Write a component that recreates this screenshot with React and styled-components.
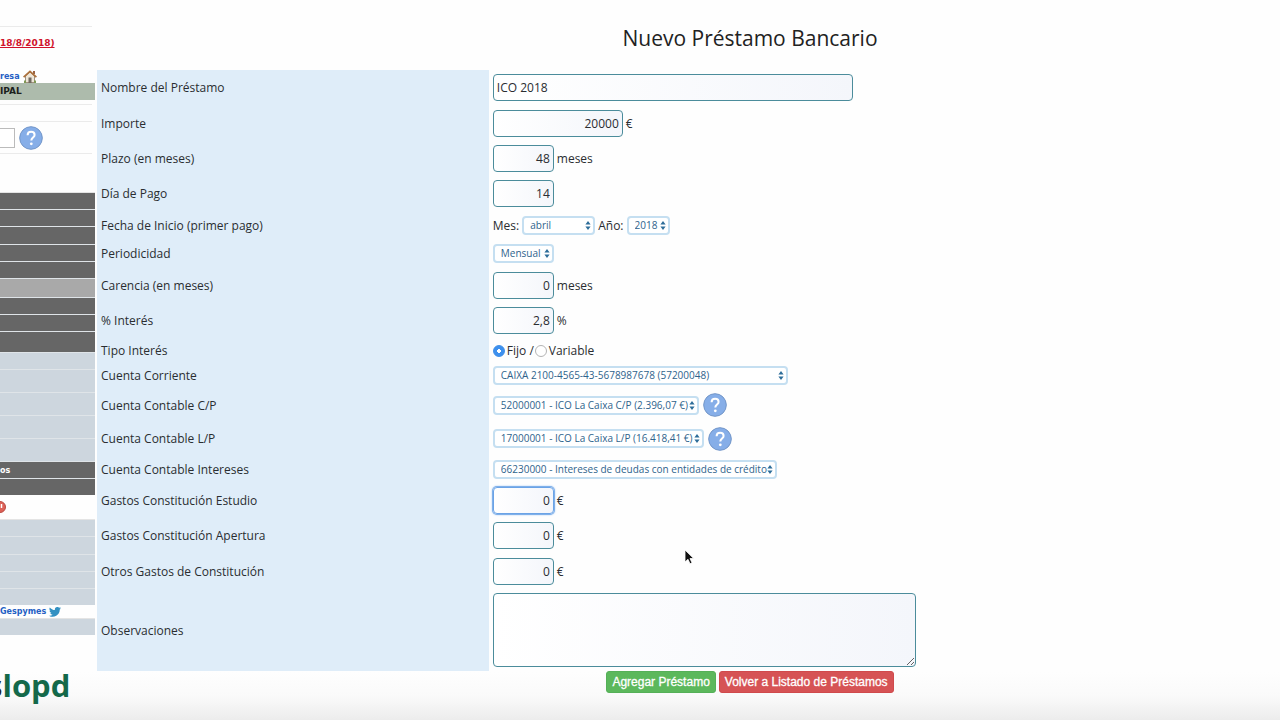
import React from 'react'
import styled, { createGlobalStyle, css } from 'styled-components'

const GlobalStyle = createGlobalStyle`
    * {
        box-sizing: border-box;
    }
    body {
        margin: 0;
        overflow: hidden;
        background: #fefefe;
        color: #2a2d31;
        font-family: 'Open Sans', 'Noto Sans', sans-serif;
        font-size: 12px;
    }
`

const Page = styled.div`
    display: flex;
    gap: 2px;
    min-height: 100vh;
    overflow: hidden;
    background: linear-gradient(to top, #ececec 0, #fafafa 24px, #fefefe 48px);
`

const Sidebar = styled.aside`
    width: 95px;
    flex: none;
    overflow: hidden;
    padding-top: 26px;
    font-family: 'DejaVu Sans', Verdana, sans-serif;
    font-size: 9px;
    font-weight: bold;
    white-space: nowrap;
`

const SideLine = styled.div`
    display: flex;
    align-items: center;
    gap: 3px;
    height: ${p => p.$height}px;
    margin-right: 3px;
    border-top: ${p => (p.$rule ? '1px solid #ebebeb' : 'none')};
`

const SideLink = styled.a`
    color: ${p => (p.$alert ? '#d0122b' : '#2460c4')};
    font-size: ${p => (p.$alert ? '9px' : '8px')};
    text-decoration: ${p => (p.$alert ? 'underline' : 'none')};
`

const SideHeading = styled.div`
    height: 17px;
    margin-bottom: 4px;
    line-height: 17px;
    color: #1c1f1c;
    background: #adbbac;
`

const SideInput = styled.input`
    width: 15px;
    height: 20px;
    padding: 0;
    border: 1px solid #bbb;
    border-left: 0;
    background: #fff;
`

const menuColors = {
    dark: '#666666',
    active: '#a9a9a9',
    light: '#cdd6de'
}

const Menu = styled.nav`
    display: flex;
    flex-direction: column;
    gap: 1px;
    background: #dfe4e8;
    border-top: 1px solid #e4e4e4;
`

const MenuItem = styled.a`
    display: flex;
    align-items: center;
    height: ${p => p.$height}px;
    color: #fff;
    font-size: 8px;
    text-decoration: none;
    background: ${p => menuColors[p.$tone]};
`

const Brand = styled.div`
    margin: 30px 0 0 -13px;
    font-family: 'Open Sans', sans-serif;
    font-size: 31px;
    line-height: 40px;
    color: #222;

    span {
        color: #14694a;
    }
`

/* The form is wider than the window, its right part runs off the screen */
const Main = styled.main`
    flex: 1;
    min-width: 0;
    margin-right: -123px;
`

const Title = styled.h1`
    margin: 0;
    padding-top: 22px;
    height: 70px;
    font-size: 21px;
    font-weight: 400;
    line-height: 32px;
    text-align: center;
    color: #222;
`

const FormRow = styled.div`
    display: grid;
    grid-template-columns: 30% 1fr;
    height: ${p => p.$height}px;
`

const LabelCell = styled.div`
    display: flex;
    align-items: center;
    padding-left: 4px;
    background: #dfedf9;
`

const FieldCell = styled.div`
    display: flex;
    align-items: center;
    gap: 3px;
    padding-left: 4px;
`

const boxStyle = css`
    border: 1px solid #4b8c9b;
    border-radius: 4px;
    background: linear-gradient(to right, #ffffff, #f4f6fb);
    color: #2a2d31;
    font-family: inherit;
    font-size: 12px;
    outline: none;
`

const TextInput = styled.input`
    ${boxStyle}
    width: ${p => p.$width}px;
    height: 27px;
    padding: 0 3px;
    text-align: ${p => (p.$left ? 'left' : 'right')};
    ${p => p.$active && css`
        border-color: #6ba3e6;
        box-shadow: 0 0 0 1px #7fb0ea, 0 0 2px 1px #a9cbf3;
    `}
`

const TextArea = styled.textarea`
    ${boxStyle}
    width: 423px;
    height: 74px;
    resize: both;
`

const SelectWrap = styled.span`
    display: flex;
    position: relative;

    svg {
        position: absolute;
        right: 4px;
        top: 5px;
        pointer-events: none;
    }
`

const SelectBox = styled.select`
    appearance: none;
    width: ${p => p.$width}px;
    height: 19px;
    padding: 0 0 0 6px;
    border: 2px solid #c5dff1;
    border-radius: 4px;
    background: #fff;
    color: #2f638c;
    font-family: inherit;
    font-size: 10px;
    line-height: 15px;
`

const HelpButton = styled.button`
    display: flex;
    margin-left: 1px;
    padding: 0;
    border: 0;
    background: none;
`

const RadioLabel = styled.label`
    display: flex;
    align-items: center;
    gap: 2px;
`

const Radio = styled.input`
    appearance: none;
    width: 12px;
    height: 12px;
    margin: 0;
    border: 1px solid #b4b4b4;
    border-radius: 50%;
    background: #fff;

    &:checked {
        border-color: #3d8ee8;
        background: radial-gradient(circle, #fff 0 2px, #3d90ee 2px);
    }
`

const RadioGroup = styled.div`
    display: flex;
    align-items: center;
    gap: 1px;
`

const Actions = styled.div`
    display: flex;
    justify-content: center;
    gap: 3px;
`

const Button = styled.button`
    height: 22px;
    padding: 0 5px;
    border: 1px solid ${p => (p.$danger ? '#d04a4c' : '#55b058')};
    border-radius: 3px;
    background: ${p => (p.$danger ? '#d65355' : '#5cb85c')};
    color: #fff;
    font-family: 'Liberation Sans', Arial, sans-serif;
    font-size: 12px;
    -webkit-text-stroke: 0.3px #fff;
`

const Cursor = styled.svg`
    position: absolute;
    left: 684px;
    top: 549px;
    pointer-events: none;
`

const Arrows = () => (
    <svg width="6" height="9" viewBox="0 0 6 9" fill="#2d6d99">
        <path d="M3 0L5.6 3.6H.4zM3 9L.4 5.4h5.2z" />
    </svg>
)

const Select = ({ id, label, width, value }) => (
    <SelectWrap>
        <SelectBox id={id} aria-label={label} $width={width} defaultValue={value}>
            <option>{value}</option>
        </SelectBox>
        <Arrows />
    </SelectWrap>
)

const Help = () => (
    <HelpButton type="button" aria-label="Ayuda">
        <svg width="24" height="24" viewBox="0 0 24 24" fill="none">
            <circle cx="12" cy="12" r="11.3" fill="#86aee8" stroke="#7396c8" />
            <path
                d="M8.6 9.2c0-2 1.4-3.4 3.5-3.4s3.5 1.3 3.5 3.1c0 2.6-3.3 2.7-3.3 5.6"
                stroke="#fff"
                strokeWidth="2"
            />
            <circle cx="12.3" cy="17.8" r="1.4" fill="#fff" />
        </svg>
    </HelpButton>
)

const House = () => (
    <svg width="14" height="13" viewBox="0 0 14 13">
        <path d="M2.5 6L7 2l4.500 4v6.500h-9z" fill="#eee6d8" stroke="#8b7762" strokeWidth=".8" />
        <path d="M10 1h2v3h-2z" fill="#9a6344" />
        <path d="M.6 7.200L7 1.300l6.400 5.900" fill="none" stroke="#ad713c" strokeWidth="1.700" />
        <path d="M5.500 7.500h3V13h-3z" fill="#71695f" />
        <path d="M1 10.500h2V13H1zM11 10.500h2V13h-2z" fill="#7f9854" />
    </svg>
)

const Bird = () => (
    <svg width="12" height="10" viewBox="0 0 24 20" fill="#3391c2">
        <path d="M24 2.400c-.9.400-1.800.7-2.800.8 1-.6 1.800-1.600 2.200-2.700-1 .6-2 1-3.100 1.200a4.900 4.900 0 0 0-8.400 4.500C7.800 6 4.100 4 1.700.9a4.900 4.900 0 0 0 1.500 6.600c-.8 0-1.600-.2-2.200-.6 0 2.300 1.600 4.400 3.900 4.900-.7.200-1.500.2-2.200.1.600 2 2.400 3.400 4.600 3.400A9.900 9.900 0 0 1 0 17.300 14 14 0 0 0 21.500 4.900c1-.7 1.800-1.600 2.500-2.500z" />
    </svg>
)

const Alert = () => (
    <svg width="6" height="12" viewBox="0 0 6 12">
        <circle cx="0" cy="6" r="5.500" fill="#dd6157" stroke="#b94a42" />
        <path d="M1.500 3v4" stroke="#fff" strokeWidth="1.500" />
    </svg>
)

const Amount = ({ id, value, unit, width = 61, ...rest }) => (
    <>
        <TextInput id={id} defaultValue={value} $width={width} {...rest} />
        {unit && <span>{unit}</span>}
    </>
)

const rows = [
    { id: 'nombre', label: 'Nombre del Préstamo', height: 35, field: <TextInput id="nombre" defaultValue="ICO 2018" $width={360} $left /> },
    { id: 'importe', label: 'Importe', height: 36, field: <Amount id="importe" value="20000" unit="€" width={130} /> },
    { id: 'plazo', label: 'Plazo (en meses)', height: 35, field: <Amount id="plazo" value="48" unit="meses" /> },
    { id: 'dia', label: 'Día de Pago', height: 35, field: <Amount id="dia" value="14" /> },
    {
        id: 'mes',
        label: 'Fecha de Inicio (primer pago)',
        height: 28,
        field: (
            <>
                <span>Mes:</span>
                <Select id="mes" width={73} value="abril" />
                <label htmlFor="anio">Año:</label>
                <Select id="anio" width={43} value="2018" />
            </>
        )
    },
    { id: 'periodicidad', label: 'Periodicidad', height: 28, field: <Select id="periodicidad" width={61} value="Mensual" /> },
    { id: 'carencia', label: 'Carencia (en meses)', height: 36, field: <Amount id="carencia" value="0" unit="meses" /> },
    { id: 'interes', label: '% Interés', height: 35, field: <Amount id="interes" value="2,8" unit="%" /> },
    {
        id: 'fijo',
        label: 'Tipo Interés',
        height: 25,
        field: (
            <RadioGroup>
                <RadioLabel>
                    <Radio type="radio" name="tipo" id="fijo" defaultChecked />
                    Fijo /
                </RadioLabel>
                <RadioLabel>
                    <Radio type="radio" name="tipo" />
                    Variable
                </RadioLabel>
            </RadioGroup>
        )
    },
    { id: 'corriente', label: 'Cuenta Corriente', height: 25, field: <Select id="corriente" width={295} value="CAIXA 2100-4565-43-5678987678 (57200048)" /> },
    {
        id: 'cp',
        label: 'Cuenta Contable C/P',
        height: 34,
        field: (
            <>
                <Select id="cp" width={206} value="52000001 - ICO La Caixa C/P (2.396,07 €)" />
                <Help />
            </>
        )
    },
    {
        id: 'lp',
        label: 'Cuenta Contable L/P',
        height: 33,
        field: (
            <>
                <Select id="lp" width={211} value="17000001 - ICO La Caixa L/P (16.418,41 €)" />
                <Help />
            </>
        )
    },
    { id: 'intereses', label: 'Cuenta Contable Intereses', height: 28, field: <Select id="intereses" width={284} value="66230000 - Intereses de deudas con entidades de crédito" /> },
    { id: 'estudio', label: 'Gastos Constitución Estudio', height: 35, field: <Amount id="estudio" value="0" unit="€" $active /> },
    { id: 'apertura', label: 'Gastos Constitución Apertura', height: 35, field: <Amount id="apertura" value="0" unit="€" /> },
    { id: 'otros', label: 'Otros Gastos de Constitución', height: 36, field: <Amount id="otros" value="0" unit="€" /> },
    { id: 'observaciones', label: 'Observaciones', height: 82, field: <TextArea id="observaciones" /> }
]

const topMenu = [
    ['dark', 16], ['dark', 16], ['dark', 17], ['dark', 16], ['dark', 16],
    ['active', 18], ['dark', 16], ['dark', 16], ['dark', 20],
    ['light', 16], ['light', 22], ['light', 22], ['light', 22], ['light', 22],
    ['dark', 16, 'os'], ['dark', 16]
]

const bottomMenu = [16, 17, 16, 16, 16]

const App = () => (
    <Page>
        <GlobalStyle />
        <Sidebar>
            <SideLine $height={33} $rule>
                <SideLink href="#" $alert>18/8/2018)</SideLink>
            </SideLine>
            <SideLine $height={10} />
            <SideLine $height={14}>
                <SideLink href="#">resa</SideLink>
                <House />
            </SideLine>
            <SideHeading>IPAL</SideHeading>
            <SideLine $height={17} $rule />
            <SideLine $height={32} $rule>
                <SideInput aria-label="Buscar" />
                <Help />
            </SideLine>
            <SideLine $height={39} $rule />
            <Menu>
                {topMenu.map(([tone, height, text], i) => (
                    <MenuItem key={i} href="#" $tone={tone} $height={height}>{text}</MenuItem>
                ))}
            </Menu>
            <SideLine $height={24}>
                <Alert />
            </SideLine>
            <Menu>
                {bottomMenu.map((height, i) => (
                    <MenuItem key={i} href="#" $tone="light" $height={height} />
                ))}
            </Menu>
            <SideLine $height={13}>
                <SideLink href="#">Gespymes</SideLink>
                <Bird />
            </SideLine>
            <Menu>
                <MenuItem href="#" $tone="light" $height={16} />
            </Menu>
            <Brand>s<span>lopd</span></Brand>
        </Sidebar>
        <Main>
            <Title>Nuevo Préstamo Bancario</Title>
            <form onSubmit={e => e.preventDefault()}>
                {rows.map(({ id, label, height, field }) => (
                    <FormRow key={id} $height={height}>
                        <LabelCell>
                            <label htmlFor={id}>{label}</label>
                        </LabelCell>
                        <FieldCell>{field}</FieldCell>
                    </FormRow>
                ))}
                <Actions>
                    <Button type="submit">Agregar Préstamo</Button>
                    <Button type="button" $danger>Volver a Listado de Préstamos</Button>
                </Actions>
            </form>
        </Main>
        <Cursor width="10" height="16" viewBox="0 0 10 16">
            <path d="M1 1v12l3-2.700 2 4.500 2-1-2-4.300h3.700z" fill="#111" stroke="#fff" strokeWidth=".8" />
        </Cursor>
    </Page>
)

export default App
